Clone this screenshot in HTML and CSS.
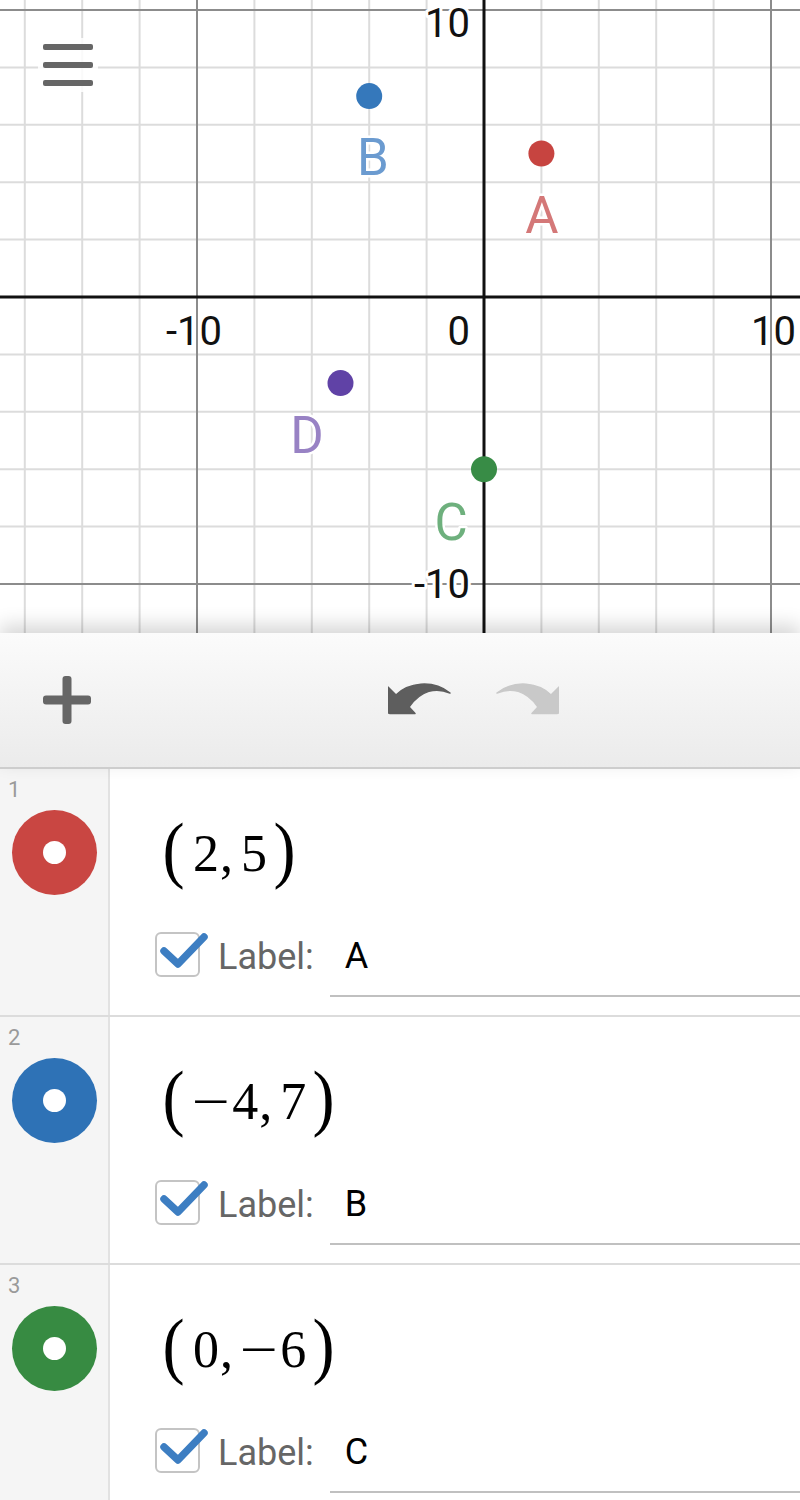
FILE: index.html
```html
<!DOCTYPE html>
<html>
<head>
<meta charset="utf-8">
<link rel="stylesheet" href="styles.css">
</head>
<body>
<div class="graph">
  <svg class="grid" width="800" height="633" viewBox="0 0 800 633">
    <g class="minor">
      <line x1="24.8" y1="0" x2="24.8" y2="633"/>
      <line x1="82.2" y1="0" x2="82.2" y2="633"/>
      <line x1="139.6" y1="0" x2="139.6" y2="633"/>
      <line x1="254.4" y1="0" x2="254.4" y2="633"/>
      <line x1="311.8" y1="0" x2="311.8" y2="633"/>
      <line x1="369.2" y1="0" x2="369.2" y2="633"/>
      <line x1="426.6" y1="0" x2="426.6" y2="633"/>
      <line x1="541.4" y1="0" x2="541.4" y2="633"/>
      <line x1="598.8" y1="0" x2="598.8" y2="633"/>
      <line x1="656.2" y1="0" x2="656.2" y2="633"/>
      <line x1="713.6" y1="0" x2="713.6" y2="633"/>
      <line x1="0" y1="67.4" x2="800" y2="67.4"/>
      <line x1="0" y1="124.8" x2="800" y2="124.8"/>
      <line x1="0" y1="182.2" x2="800" y2="182.2"/>
      <line x1="0" y1="239.6" x2="800" y2="239.6"/>
      <line x1="0" y1="354.4" x2="800" y2="354.4"/>
      <line x1="0" y1="411.8" x2="800" y2="411.8"/>
      <line x1="0" y1="469.2" x2="800" y2="469.2"/>
      <line x1="0" y1="526.6" x2="800" y2="526.6"/>
    </g>
    <g class="major">
      <line x1="197" y1="0" x2="197" y2="633"/>
      <line x1="771" y1="0" x2="771" y2="633"/>
      <line x1="0" y1="10" x2="800" y2="10"/>
      <line x1="0" y1="584" x2="800" y2="584"/>
    </g>
    <g class="axis">
      <line x1="484" y1="0" x2="484" y2="633"/>
      <line x1="0" y1="297" x2="800" y2="297"/>
    </g>
    <g class="ticks">
      <text x="470" y="37" text-anchor="end">10</text>
      <text x="222" y="345" text-anchor="end">-10</text>
      <text x="470" y="345" text-anchor="end">0</text>
      <text x="751" y="345" text-anchor="start">10</text>
      <text x="470" y="598" text-anchor="end">-10</text>
    </g>
    <g class="points">
      <circle cx="541.4" cy="153.5" r="13" fill="#c74440"/>
      <circle cx="369.2" cy="96.1" r="13" fill="#3578bb"/>
      <circle cx="484" cy="469.2" r="13" fill="#388c46"/>
      <circle cx="340.5" cy="383.1" r="13" fill="#6042a6"/>
    </g>
    <g class="plabels">
      <text x="542" y="233" fill="#d47878">A</text>
      <text x="373" y="175" fill="#6b9bd0">B</text>
      <text x="451" y="540" fill="#6eb07d">C</text>
      <text x="307" y="453" fill="#9882c4">D</text>
    </g>
  </svg>
  <div class="menu">
    <span class="bar"></span>
    <span class="bar"></span>
    <span class="bar"></span>
  </div>
</div>

<div class="toolbar">
  <svg class="plus" width="50" height="50" viewBox="0 0 50 50">
    <rect x="20.5" y="1" width="9" height="48" rx="3" fill="#666"/>
    <rect x="1" y="20.5" width="48" height="9" rx="3" fill="#666"/>
  </svg>
  <svg class="undo" width="64" height="34" viewBox="0 0 64 34">
    <path d="M0,6 L8,14 C20,2 44,-2 62,12 C48,6 33,9 21,26 L27,32.5 L2,32.5 Q0,32.5 0,30.5 Z" fill="#5e5e5e" stroke="#5e5e5e" stroke-width="1.5" stroke-linejoin="round"/>
  </svg>
  <svg class="redo" width="64" height="34" viewBox="0 0 64 34">
    <path d="M64,6 L56,14 C44,2 20,-2 2,12 C16,6 31,9 43,26 L37,32.5 L62,32.5 Q64,32.5 64,30.5 Z" fill="#c9c9c9" stroke="#c9c9c9" stroke-width="1.5" stroke-linejoin="round"/>
  </svg>
</div>

<div class="list">
  <div class="row">
    <div class="gutter">
      <span class="num">1</span>
      <span class="dot red"></span>
    </div>
    <div class="content">
      <div class="math">
        <span class="paren">(</span><span class="d">2</span><span class="comma">,</span><span class="d">5</span><span class="paren rp">)</span>
      </div>
      <div class="labelrow">
        <svg class="check" width="54" height="46" viewBox="0 0 54 46">
          <rect x="1" y="1" width="43" height="43" rx="5" fill="#fff" stroke="#c4c4c4" stroke-width="2"/>
          <polyline points="9,19 23,32 49,5" fill="none" stroke="#3d7ec2" stroke-width="7.5" stroke-linecap="round" stroke-linejoin="round"/>
        </svg>
        <span class="lbl">Label:</span>
        <span class="field">A</span>
      </div>
    </div>
  </div>
  <div class="row">
    <div class="gutter">
      <span class="num">2</span>
      <span class="dot blue"></span>
    </div>
    <div class="content">
      <div class="math">
        <span class="paren">(</span><span class="minus">−</span><span class="d">4</span><span class="comma">,</span><span class="d">7</span><span class="paren rp">)</span>
      </div>
      <div class="labelrow">
        <svg class="check" width="54" height="46" viewBox="0 0 54 46">
          <rect x="1" y="1" width="43" height="43" rx="5" fill="#fff" stroke="#c4c4c4" stroke-width="2"/>
          <polyline points="9,19 23,32 49,5" fill="none" stroke="#3d7ec2" stroke-width="7.5" stroke-linecap="round" stroke-linejoin="round"/>
        </svg>
        <span class="lbl">Label:</span>
        <span class="field">B</span>
      </div>
    </div>
  </div>
  <div class="row">
    <div class="gutter">
      <span class="num">3</span>
      <span class="dot green"></span>
    </div>
    <div class="content">
      <div class="math">
        <span class="paren">(</span><span class="d">0</span><span class="comma">,</span><span class="minus">−</span><span class="d">6</span><span class="paren rp">)</span>
      </div>
      <div class="labelrow">
        <svg class="check" width="54" height="46" viewBox="0 0 54 46">
          <rect x="1" y="1" width="43" height="43" rx="5" fill="#fff" stroke="#c4c4c4" stroke-width="2"/>
          <polyline points="9,19 23,32 49,5" fill="none" stroke="#3d7ec2" stroke-width="7.5" stroke-linecap="round" stroke-linejoin="round"/>
        </svg>
        <span class="lbl">Label:</span>
        <span class="field">C</span>
      </div>
    </div>
  </div>
</div>
</body>
</html>
```

FILE: styles.css
```css
* { box-sizing: border-box; }
html, body {
  margin: 0;
  padding: 0;
  background: #fff;
}
body {
  width: 800px;
  height: 1500px;
  overflow: hidden;
  font-family: Roboto, "Liberation Sans", sans-serif;
}

/* graph */
.graph {
  position: relative;
  height: 633px;
  overflow: hidden;
  background: #fff;
}
.grid { display: block; }
.minor line { stroke: #dcdcdc; stroke-width: 2; }
.major line { stroke: #8c8c8c; stroke-width: 2; }
.axis line { stroke: #111; stroke-width: 3; }
.ticks text {
  font-family: Roboto, "Liberation Sans", sans-serif;
  font-size: 40px;
  fill: #111;
  stroke: #fff;
  stroke-width: 6;
  paint-order: stroke;
  stroke-linejoin: round;
}
.plabels text {
  font-family: Roboto, "Liberation Sans", sans-serif;
  font-size: 51px;
  text-anchor: middle;
  stroke: #fff;
  stroke-width: 5;
  paint-order: stroke;
  stroke-linejoin: round;
}

.menu {
  position: absolute;
  left: 38px;
  top: 38px;
  width: 60px;
  height: 54px;
  padding: 6px 5px;
  display: flex;
  flex-direction: column;
  justify-content: space-between;
  background: rgba(255, 255, 255, 0.85);
  border-radius: 6px;
}
.bar {
  display: block;
  height: 6px;
  border-radius: 2px;
  background: #666;
}

/* toolbar */
.toolbar {
  position: relative;
  z-index: 1;
  height: 136px;
  display: flex;
  align-items: center;
  background: linear-gradient(#fbfbfb, #ebebeb);
  border-bottom: 2px solid #cdcdcd;
  box-shadow: 0 -8px 18px rgba(0, 0, 0, 0.16);
}
.plus { margin-left: 42px; margin-top: 0; }
.undo { margin-left: 296px; margin-top: -4px; }
.redo { margin-left: 43px; margin-top: -4px; }

/* list */
.list { background: #fff; }
.row {
  display: flex;
  height: 248px;
  border-bottom: 2px solid #dcdcdc;
}
.gutter {
  width: 110px;
  flex: none;
  background: #f5f5f5;
  border-right: 2px solid #e2e2e2;
  display: flex;
  flex-direction: column;
  align-items: flex-start;
}
.num {
  font-size: 22px;
  line-height: 22px;
  color: #9a9a9a;
  padding: 10px 0 0 8px;
}
.dot {
  width: 85px;
  height: 85px;
  border-radius: 50%;
  margin: 9px 0 0 12px;
  display: flex;
  align-items: center;
  justify-content: center;
}
.dot::after {
  content: "";
  width: 23px;
  height: 23px;
  border-radius: 50%;
  background: #fff;
}
.red { background: #c94642; }
.blue { background: #2e72b6; }
.green { background: #378b42; }

.content {
  flex: 1;
  display: flex;
  flex-direction: column;
  padding-left: 55px;
}
.math {
  margin-top: 44px;
  height: 80px;
  display: flex;
  align-items: center;
  font-family: "Liberation Serif", "Times New Roman", serif;
  font-size: 52px;
  color: #000;
}
.paren {
  display: inline-block;
  font-size: 51px;
  line-height: 1;
  transform: scale(1.3, 1.45);
  margin-right: 11px;
  margin-top: -6px;
}
.paren.rp { margin-right: 0; margin-left: 9px; }
.d { display: inline-block; }
.comma { display: inline-block; margin: 0 8px 0 1px; }
.minus { display: inline-block; margin: 0 7px 0 3px; transform: scaleX(1.3); }

.labelrow {
  margin-top: 24px;
  height: 80px;
  display: flex;
  align-items: center;
  margin-left: -10px;
}
.check { flex: none; margin-top: -4px; }
.lbl {
  font-size: 36px;
  color: #666;
  margin-left: 9px;
}
.field {
  flex: 1;
  align-self: stretch;
  margin-left: 16px;
  padding-left: 15px;
  display: flex;
  align-items: center;
  font-size: 36px;
  color: #000;
  border-bottom: 2px solid #c0c0c0;
}
```
